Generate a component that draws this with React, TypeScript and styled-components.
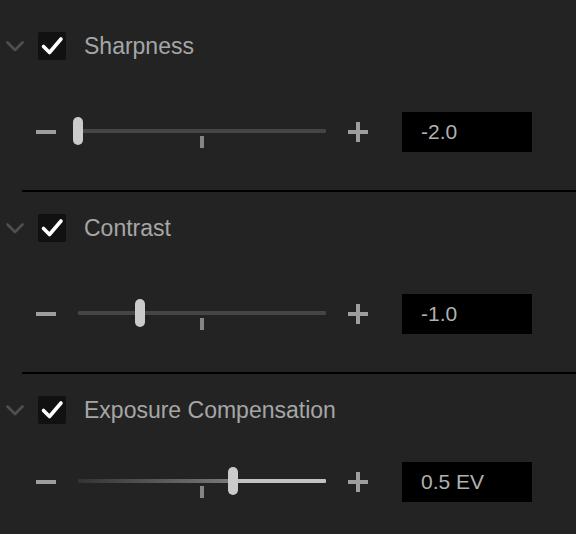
import * as React from 'react';
import styled, {createGlobalStyle} from 'styled-components';

const GlobalStyle = createGlobalStyle`
  html, body {
    margin: 0;
    padding: 0;
    background: #232323;
  }
  body {
    width: 576px;
    height: 534px;
    overflow: hidden;
    font-family: "Liberation Sans", Arial, sans-serif;
  }
`;

interface Adjustment {
  label: string;
  value: number;
  text: string;
  gradient?: boolean;
}

const MIN = -2;
const MAX = 2;
const TRACK_WIDTH = 248;

const adjustments: Adjustment[] = [
  {label: 'Sharpness', value: -2, text: '-2.0'},
  {label: 'Contrast', value: -1, text: '-1.0'},
  {label: 'Exposure Compensation', value: 0.5, text: '0.5 EV', gradient: true},
];

const Chevron = () => (
  <ChevronIcon width="18" height="11" viewBox="0 0 18 11">
    <path d="M1.5 1.5 L9 9 L16.5 1.5" fill="none" stroke="#4f4f4f" strokeWidth="2.6" strokeLinecap="round" strokeLinejoin="round" />
  </ChevronIcon>
);

const CheckMark = () => (
  <svg width="28" height="28" viewBox="0 0 28 28">
    <path d="M5.5 14.5 L11.5 20.5 L23 7" fill="none" stroke="#fff" strokeWidth="3.6" strokeLinecap="round" strokeLinejoin="round" />
  </svg>
);

const Slider: React.FC<{value: number; gradient?: boolean}> = ({value, gradient}) => {
  const pos = ((value - MIN) / (MAX - MIN)) * TRACK_WIDTH;
  return (
    <SliderWrap>
      {gradient ? (
        <>
          <TrackLeft style={{width: pos}} />
          <TrackRight style={{left: pos, width: TRACK_WIDTH - pos}} />
        </>
      ) : (
        <Track />
      )}
      <Tick />
      <Thumb style={{left: pos - 5}} />
    </SliderWrap>
  );
};

export default function App() {
  return (
    <>
      <GlobalStyle />
      <Panel>
        {adjustments.map((adj, index) => (
          <Section key={adj.label} first={index === 0}>
            <Header>
              <Chevron />
              <CheckBox><CheckMark /></CheckBox>
              <Label>{adj.label}</Label>
            </Header>
            <SliderRow compact={index === adjustments.length - 1}>
              <Minus />
              <Slider value={adj.value} gradient={adj.gradient} />
              <Plus />
              <ValueBox>{adj.text}</ValueBox>
            </SliderRow>
            {index < adjustments.length - 1 && <Divider />}
          </Section>
        ))}
      </Panel>
    </>
  );
}

const Panel = styled.div`
  width: 576px;
  display: flex;
  flex-direction: column;
`;

const Section = styled.section<{first?: boolean}>`
  padding-top: ${props => props.first ? '32px' : '22px'};
  display: flex;
  flex-direction: column;
`;

const Header = styled.div`
  height: 28px;
  display: flex;
  align-items: center;
  padding-left: 6px;
`;

const ChevronIcon = styled.svg`
  display: block;
  margin-right: 14px;
`;

const CheckBox = styled.div`
  width: 28px;
  height: 28px;
  background: #111;
  border-radius: 2px;
  display: flex;
  align-items: center;
  justify-content: center;
  margin-right: 18px;
`;

const Label = styled.span`
  font-size: 23px;
  color: #a6a6a6;
  line-height: 28px;
  white-space: nowrap;
`;

const SliderRow = styled.div<{compact?: boolean}>`
  margin-top: ${props => props.compact ? '38px' : '52px'};
  height: 40px;
  display: flex;
  align-items: center;
  padding-left: 36px;
  margin-bottom: 38px;
`;

const Minus = styled.div`
  width: 20px;
  height: 4px;
  background: #9e9e9e;
  margin-right: 22px;
`;

const Plus = styled.div`
  position: relative;
  width: 20px;
  height: 20px;
  margin-left: 22px;
  margin-right: 34px;
  &::before, &::after {
    content: '';
    position: absolute;
    background: #9e9e9e;
  }
  &::before {
    left: 0;
    top: 8px;
    width: 20px;
    height: 4px;
  }
  &::after {
    left: 8px;
    top: 0;
    width: 4px;
    height: 20px;
  }
`;

const SliderWrap = styled.div`
  position: relative;
  width: ${TRACK_WIDTH}px;
  height: 40px;
`;

const Track = styled.div`
  position: absolute;
  left: 0;
  right: 0;
  top: 17px;
  height: 4px;
  background: #454545;
  border-radius: 1px;
`;

const TrackLeft = styled.div`
  position: absolute;
  left: 0;
  top: 17px;
  height: 4px;
  background: linear-gradient(to right, #333 0%, #7a7a7a 100%);
`;

const TrackRight = styled.div`
  position: absolute;
  top: 17px;
  height: 4px;
  background: #c2c2c2;
  border-radius: 1px;
`;

const Tick = styled.div`
  position: absolute;
  left: 122px;
  top: 24px;
  width: 4px;
  height: 12px;
  background: #858585;
`;

const Thumb = styled.div`
  position: absolute;
  top: 5px;
  width: 10px;
  height: 28px;
  background: #cbcbcb;
  border-radius: 5px;
`;

const ValueBox = styled.div`
  width: 130px;
  height: 40px;
  box-sizing: border-box;
  background: #000;
  padding-left: 19px;
  display: flex;
  align-items: center;
  font-size: 21px;
  color: #b0b0b0;
`;

const Divider = styled.div`
  height: 2px;
  margin-left: 22px;
  background: #000;
`;
